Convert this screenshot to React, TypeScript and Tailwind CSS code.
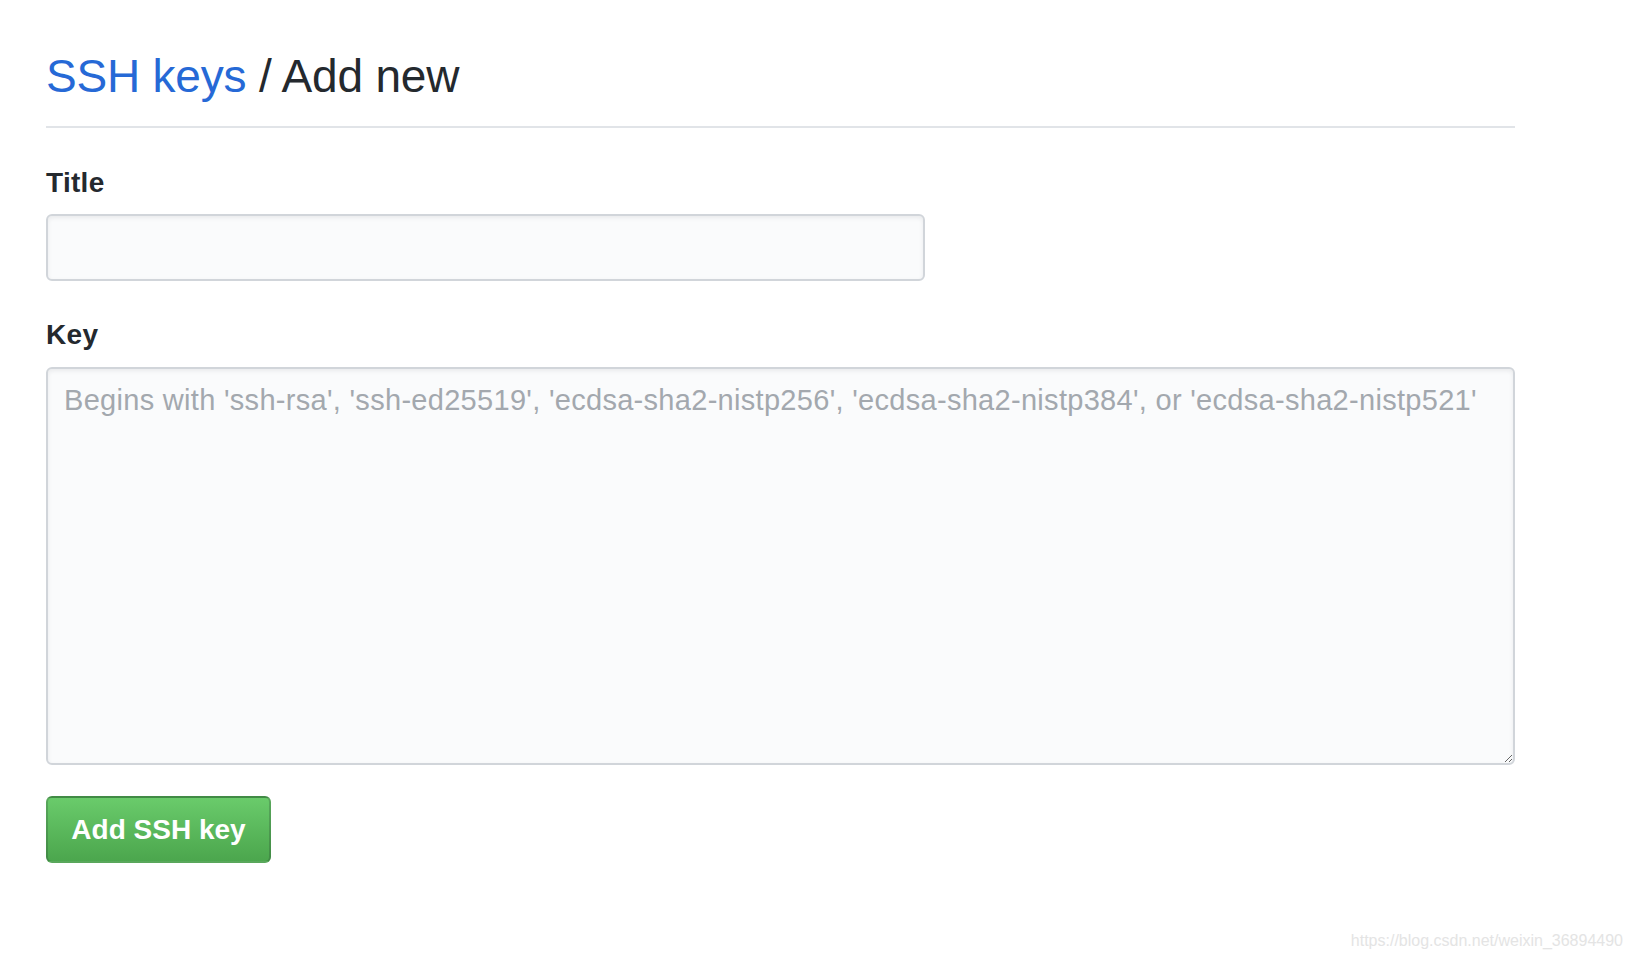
import React from "react";

export default function App() {
  return (
    <div className="relative min-h-[960px] w-full bg-white font-['Liberation_Sans',Arial,sans-serif] text-[#24292e]">
      <div className="flex w-[1469px] flex-col pl-0 ml-[46px] pt-[46px]">
        {/* Subhead */}
        <div className="border-b-2 border-[#e1e4e8] pb-[20px]">
          <h1 className="text-[46px] leading-[60px] font-normal tracking-[-0.2px]">
            <a href="#" className="text-[#2669d6]">SSH keys</a>
            <span> / Add new</span>
          </h1>
        </div>

        {/* Title field */}
        <label className="mt-[37px] text-[28px] leading-[36px] font-bold tracking-[0.3px]">Title</label>
        <input
          type="text"
          className="mt-[13px] h-[67px] w-[879px] rounded-[6px] border-2 border-[#d1d5da] bg-[#fafbfc] px-4 text-[28px] shadow-[inset_0_2px_4px_rgba(27,31,35,0.075)] outline-none"
        />

        {/* Key field */}
        <label className="mt-[36px] text-[28px] leading-[36px] font-bold tracking-[0.3px]">Key</label>
        <textarea
          placeholder="Begins with 'ssh-rsa', 'ssh-ed25519', 'ecdsa-sha2-nistp256', 'ecdsa-sha2-nistp384', or 'ecdsa-sha2-nistp521'"
          className="mt-[14px] h-[398px] w-full resize rounded-[6px] border-2 border-[#d1d5da] bg-[#fafbfc] px-4 pt-[11px] text-[29px] leading-[40px] tracking-[0.3px] shadow-[inset_0_2px_4px_rgba(27,31,35,0.075)] outline-none placeholder:text-[#a3a8ae]"
        />

        {/* Submit */}
        <div className="mt-[31px]">
          <button
            type="button"
            className="h-[67px] w-[225px] rounded-[6px] border-2 border-[rgba(27,31,35,0.2)] bg-gradient-to-b from-[#6acb6b] to-[#4ba64d] text-[28px] font-bold text-white"
          >
            Add SSH key
          </button>
        </div>
      </div>

      {/* watermark */}
      <div className="absolute bottom-[10px] right-[9px] text-[16px] leading-[18px] text-[#e4e4e4]">
        https://blog.csdn.net/weixin_36894490
      </div>
    </div>
  );
}
